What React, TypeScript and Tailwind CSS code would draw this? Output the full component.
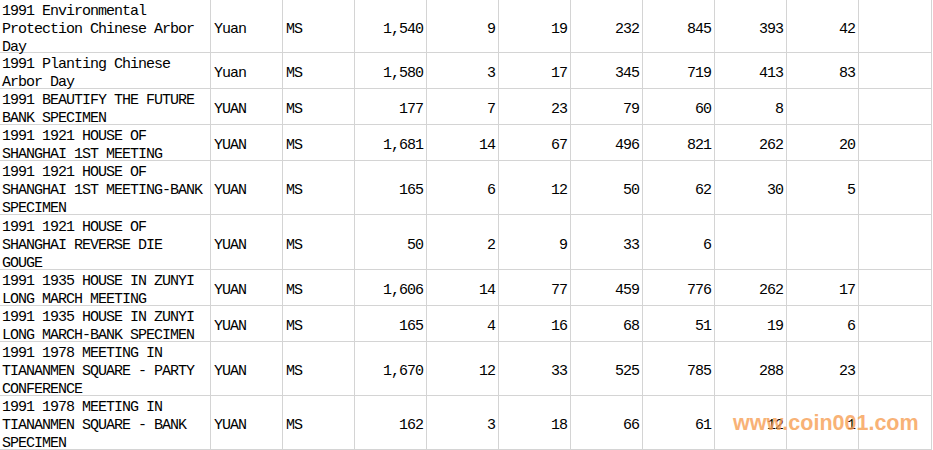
import React from 'react';

type Row = { h: string; name: string[]; cur: string; type: string; nums: string[] };

const rows: Row[] = [
  { h: 'h-[53px]', name: ['1991 Environmental', 'Protection Chinese Arbor', 'Day'], cur: 'Yuan', type: 'MS', nums: ['1,540', '9', '19', '232', '845', '393', '42'] },
  { h: 'h-[36px]', name: ['1991 Planting Chinese', 'Arbor Day'], cur: 'Yuan', type: 'MS', nums: ['1,580', '3', '17', '345', '719', '413', '83'] },
  { h: 'h-[36px]', name: ['1991 BEAUTIFY THE FUTURE', 'BANK SPECIMEN'], cur: 'YUAN', type: 'MS', nums: ['177', '7', '23', '79', '60', '8', ''] },
  { h: 'h-[36px]', name: ['1991 1921 HOUSE OF', 'SHANGHAI 1ST MEETING'], cur: 'YUAN', type: 'MS', nums: ['1,681', '14', '67', '496', '821', '262', '20'] },
  { h: 'h-[54px]', name: ['1991 1921 HOUSE OF', 'SHANGHAI 1ST MEETING-BANK', 'SPECIMEN'], cur: 'YUAN', type: 'MS', nums: ['165', '6', '12', '50', '62', '30', '5'] },
  { h: 'h-[55px]', name: ['1991 1921 HOUSE OF', 'SHANGHAI REVERSE DIE', 'GOUGE'], cur: 'YUAN', type: 'MS', nums: ['50', '2', '9', '33', '6', '', ''] },
  { h: 'h-[36px]', name: ['1991 1935 HOUSE IN ZUNYI', 'LONG MARCH MEETING'], cur: 'YUAN', type: 'MS', nums: ['1,606', '14', '77', '459', '776', '262', '17'] },
  { h: 'h-[36px]', name: ['1991 1935 HOUSE IN ZUNYI', 'LONG MARCH-BANK SPECIMEN'], cur: 'YUAN', type: 'MS', nums: ['165', '4', '16', '68', '51', '19', '6'] },
  { h: 'h-[54px]', name: ['1991 1978 MEETING IN', 'TIANANMEN SQUARE - PARTY', 'CONFERENCE'], cur: 'YUAN', type: 'MS', nums: ['1,670', '12', '33', '525', '785', '288', '23'] },
  { h: 'h-[54px]', name: ['1991 1978 MEETING IN', 'TIANANMEN SQUARE - BANK', 'SPECIMEN'], cur: 'YUAN', type: 'MS', nums: ['162', '3', '18', '66', '61', '12', '1'] },
];

const cell = 'border-r border-b border-[#d4d4d4] flex items-center pt-[7px]';

export default function App() {
  return (
    <div className="relative w-[933px] h-[450px] overflow-hidden bg-white text-black font-['Liberation_Mono',monospace] text-[15px] leading-[18px] tracking-[-1px]">
      <div className="grid grid-cols-[211px_72px_72px_72px_72px_72px_72px_72px_72px_72px_73px]">
        {rows.map((r, i) => (
          <React.Fragment key={i}>
            <div className={`${cell} ${r.h} pl-[2px]`}>
              <div>
                {r.name.map((l, j) => (
                  <div key={j} className="whitespace-pre">{l}</div>
                ))}
              </div>
            </div>
            <div className={`${cell} ${r.h} pl-[3px]`}>{r.cur}</div>
            <div className={`${cell} ${r.h} pl-[3px]`}>{r.type}</div>
            {r.nums.map((n, k) => (
              <div key={k} className={`${cell} ${r.h} justify-end pr-[3px]`}>{n}</div>
            ))}
            <div className={`${cell} ${r.h}`}></div>
          </React.Fragment>
        ))}
      </div>
      <div className="absolute left-[733px] top-[410px] font-['Liberation_Sans',sans-serif] font-bold text-[21.5px] leading-[26px] tracking-normal text-[#f7a055] opacity-80">
        www.coin001.com
      </div>
    </div>
  );
}
